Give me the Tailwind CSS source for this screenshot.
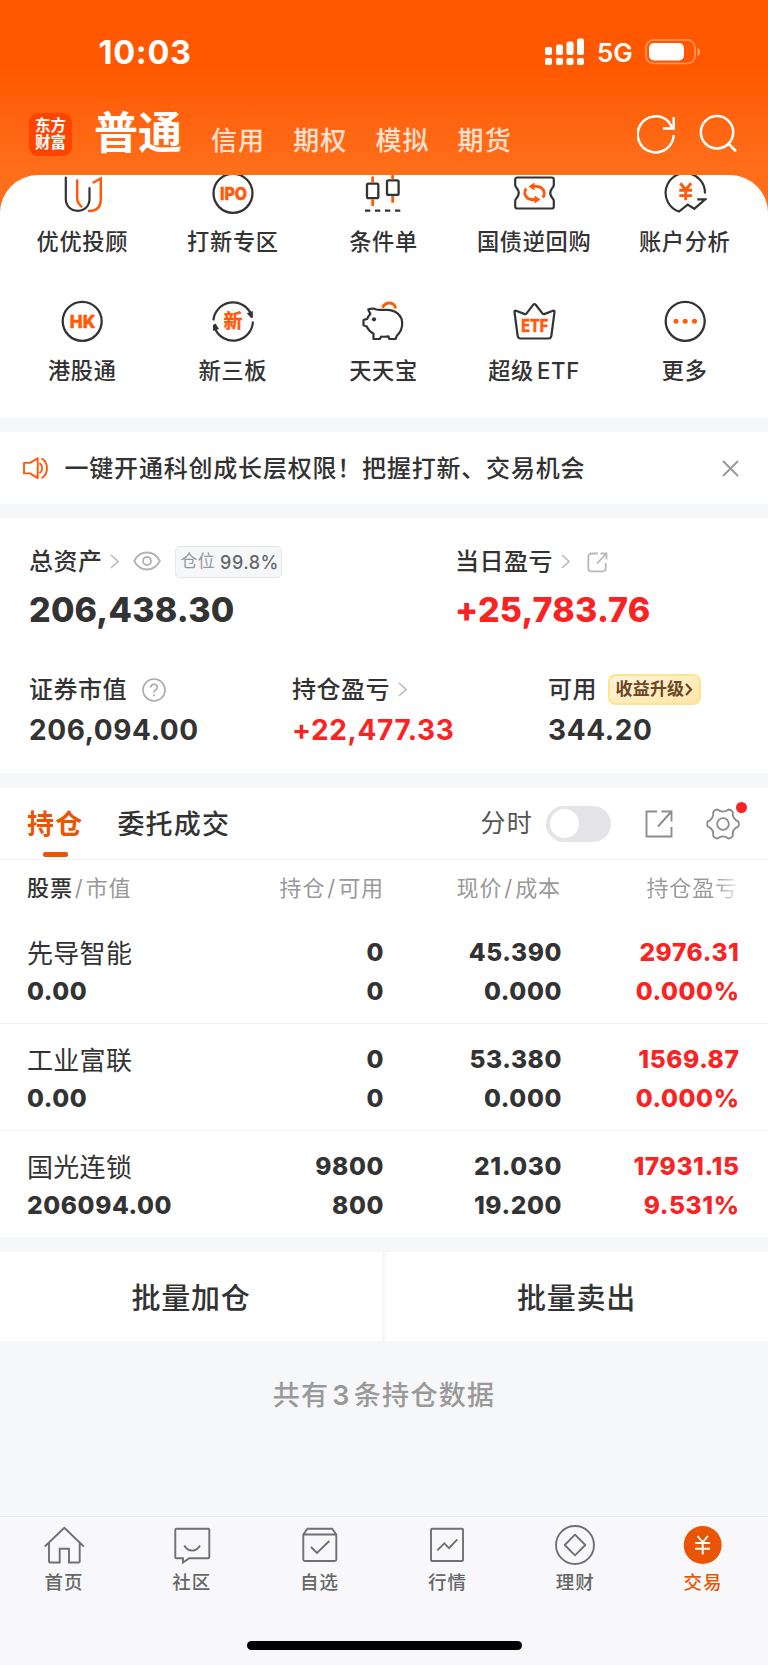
<!DOCTYPE html>
<html lang="zh-CN">
<head>
<meta charset="utf-8">
<meta name="viewport" content="width=device-width, initial-scale=1">
<title>交易</title>
<script src="https://cdn.jsdelivr.net/npm/@tailwindcss/browser@4"></script>
</head>
<body class="w-[768px] h-[1665px] overflow-hidden flex flex-col bg-[#f6f7f9] text-[#333] font-[Inter,'Noto_Sans_CJK_SC',sans-serif] whitespace-nowrap">

<!-- Header -->
<header class="h-[220px] shrink-0 bg-linear-to-b from-[#ff5800] from-30% to-[#ff6f1a] to-80% text-white">
  <div class="h-[104px] pl-[98.5px] pr-[66px] flex items-center">
    <div class="pt-[2px] text-[32.5px] font-bold leading-8 tracking-[0.7px]">10:03</div>
    <svg class="ml-auto mr-3" width="40" height="28" viewBox="0 0 40 28" fill="#fff">
      <rect x="0" y="9" width="7" height="8" rx="2"/><rect x="11" y="6.500" width="7" height="10.500" rx="2"/><rect x="21.500" y="3.500" width="7" height="13.500" rx="2"/><rect x="32" y="0.500" width="7" height="16.500" rx="2"/>
      <rect x="0" y="20" width="7" height="7" rx="2"/><rect x="11" y="20" width="7" height="7" rx="2"/><rect x="21.500" y="20" width="7" height="7" rx="2"/><rect x="32" y="20" width="7" height="7" rx="2"/>
    </svg>
    <div class="text-[26px] font-semibold leading-7 pt-[2px] w-[37px]">5G</div>
    <svg class="ml-[11px]" width="57" height="26" viewBox="0 0 57 26">
      <rect x="1" y="1" width="49" height="23.500" rx="7.500" fill="none" stroke="#fff" stroke-opacity=".4" stroke-width="1.600"/>
      <rect x="4" y="4" width="35" height="17.500" rx="5" fill="#fff"/>
      <path d="M52.500 9v8c3.500-1.200 3.500-6.800 0-8Z" fill="#fff" fill-opacity=".45"/>
    </svg>
  </div>
  <div class="h-[60px] pl-[29px] pr-[29px] flex items-center">
    <div class="size-[43px] rounded-[9px] bg-[#ff4400] flex flex-col items-center justify-center text-[15.5px] leading-[17px] font-bold">
      <span>东方</span><span>财富</span>
    </div>
    <div class="ml-[22px] w-[88px] -mt-[2px] text-[44px] leading-[50px] font-bold">普通</div>
    <nav class="ml-[29px] mt-[13px] flex gap-[28px] text-[26px] leading-8 tracking-[1.1px] text-white/80 font-medium">
      <span>信用</span><span>期权</span><span>模拟</span><span>期货</span>
    </nav>
    <svg class="ml-auto -mt-[1px]" width="102" height="44" viewBox="0 0 102 44" fill="none" stroke="#fff" stroke-width="2.500">
      <path d="M36.700 23A18 18 0 1 1 31.500 9.700L35.500 15.500"/><path d="M36.700 5v11.500H26"/>
      <circle cx="80" cy="20.300" r="16.200"/><path d="M91.500 31.800l7.500 7.500" stroke-width="2.800"/>
    </svg>
  </div>
</header>

<!-- Shortcuts -->
<section class="-mt-[45px] h-[243px] shrink-0 bg-white rounded-t-[38px] overflow-hidden pl-[7px] pr-[8px]">
  <div class="-mt-1 grid grid-cols-5 gap-y-[42px] text-[22.2px] leading-[30px] tracking-[0.7px] font-medium text-center">
    <div class="flex flex-col items-center gap-3">
      <svg width="44" height="44" viewBox="0 0 44 44" fill="none" stroke="#333" stroke-width="2.200" stroke-linecap="round"><path d="M5.800 6.500v21.500c0 7 5 11.800 11.900 11.800s11.800-4.800 11.800-11.800V17"/><g stroke="#ff5a0a" stroke-width="2.500"><path d="M17.200 9.500V27c0 3.800 1.500 6.300 4.200 8.400"/><path d="M33.500 11.500l7.300-4v20.800c0 7.500-4 11.700-11.800 11.700"/></g></svg>
      <span>优优投顾</span>
    </div>
    <div class="flex flex-col items-center gap-3">
      <svg width="44" height="44" viewBox="0 0 44 44"><circle cx="22" cy="22.300" r="19.500" fill="none" stroke="#333" stroke-width="2.300"/><text x="9" y="28.500" font-size="17" font-weight="800" fill="#ff5a0a" stroke="#ff5a0a" stroke-width=".5" stroke-linejoin="round" letter-spacing="0" textLength="27" lengthAdjust="spacingAndGlyphs">IPO</text></svg>
      <span>打新专区</span>
    </div>
    <div class="flex flex-col items-center gap-3">
      <svg width="44" height="44" viewBox="0 0 44 44" fill="none" stroke="#333" stroke-width="2.300"><rect x="6" y="12.600" width="11.300" height="14.600" rx="1.500"/><rect x="26" y="9.300" width="11.600" height="14.600" rx="1.500"/><path d="M4 39.700h5.300M14 39.700h5.300M24 39.700h5.300M34 39.700h5.300"/><path d="M11.700 5.500v6M11.700 28.300V35M31.700 2v6.200M31.700 25v6.800" stroke="#ff5a0a" stroke-width="2.800"/></svg>
      <span>条件单</span>
    </div>
    <div class="flex flex-col items-center gap-3">
      <svg width="44" height="44" viewBox="0 0 44 44" fill="none" stroke="#333" stroke-width="2.200"><path d="M5.200 6.500h34.600a2 2 0 0 1 2 2V14c0 1.200-.5 1.800-1.300 2.700-3.100 3.600-3.100 6.900 0 10.500.8.900 1.300 1.500 1.300 2.800v5.500a2 2 0 0 1-2 2H5.200a2 2 0 0 1-2-2V30c0-1.300.5-1.900 1.300-2.800 3.100-3.600 3.100-6.900 0-10.500-.8-.9-1.300-1.500-1.300-2.700V8.500a2 2 0 0 1 2-2Z"/><g stroke="#ff5a0a" stroke-width="2.900"><path d="M14.300 17.500c-2.700 3-2 7.200 1.500 9.700 1.800 1.200 4 1.500 7.500 1.500"/><path d="M30.700 26.500c2.700-3 2-7.200-1.500-9.700-1.800-1.200-4-1.500-7.500-1.500"/></g><path d="M22.500 24.500v8l6-4ZM22.500 11.500v8l-6-4Z" fill="#ff5a0a" stroke="none"/></svg>
      <span>国债逆回购</span>
    </div>
    <div class="flex flex-col items-center gap-3">
      <svg width="44" height="44" viewBox="0 0 44 44" fill="none" stroke="#333" stroke-width="2.200"><path d="M42 22.500A19.700 19.700 0 1 0 16 40.500l8.700-6.900 6.600 4.200 10.900-9.500h-8"/><path d="M17.300 12.300l5.400 6.500 5.400-6.500M22.700 18.300v10.900M16.300 19.300h12.800M16.300 24.600h12.800" stroke="#ff5a0a" stroke-width="2.900"/></svg>
      <span>账户分析</span>
    </div>
    <div class="flex flex-col items-center gap-[13px]">
      <svg width="44" height="44" viewBox="0 0 44 44"><circle cx="22.200" cy="22.300" r="19.500" fill="none" stroke="#333" stroke-width="2.300"/><text x="9.800" y="28.600" font-size="17" font-weight="800" fill="#ff5a0a" stroke="#ff5a0a" stroke-width=".5" stroke-linejoin="round" letter-spacing="0" textLength="25.500" lengthAdjust="spacingAndGlyphs">HK</text></svg>
      <span>港股通</span>
    </div>
    <div class="flex flex-col items-center gap-[13px]">
      <svg width="44" height="44" viewBox="0 0 44 44" fill="none" stroke="#333" stroke-width="2.200"><path d="M2.400 21.300A19.700 19.700 0 0 1 40 15"/><path d="M41.900 22.500A19.700 19.700 0 0 1 4 29.500"/><path d="M35.800 14.300l5.900-2.300.3 6.500-2 .5ZM8 29.900l-5.900 2.100-.1-6 2.500-1.500Z" fill="#333" stroke="none"/><text x="12.600" y="29" font-size="19" font-weight="700" fill="#ff5a0a" stroke="#ff5a0a" stroke-width=".4" letter-spacing="0">新</text></svg>
      <span>新三板</span>
    </div>
    <div class="flex flex-col items-center gap-[13px]">
      <svg width="44" height="44" viewBox="0 0 44 44" fill="none" stroke="#333" stroke-width="2.200" stroke-linejoin="round"><path d="M15.500 10.500c-2.500-1-5.300-1-8.200-.3.400 2 1 3.300 2.200 4.500-1.500 1.500-2.700 3.300-3.300 5.200L2.500 21v5.300l3.300 1.300c1.300 3.200 3.500 5.300 6.700 7.200V40h6.300l1.400-2.500c2.500.4 4.800.3 7.300-.1L28.200 40h6.300l1.300-3.200c3.500-3.300 5.400-7.500 5.400-12.300C41.200 16.500 34.500 10.900 26 10.900H18.500c-1 0-2-.1-3-.4Z"/><circle cx="13" cy="20.300" r="2.100" fill="#333" stroke="none"/><path d="M21.500 8.700C23 5.500 25.300 4 28.200 4c3.500 0 5.800 2 6.500 5.500" stroke="#ff5a0a" stroke-width="2.900"/></svg>
      <span>天天宝</span>
    </div>
    <div class="flex flex-col items-center gap-[13px]">
      <svg width="44" height="44" viewBox="0 0 44 44"><path d="M4 11.800l8.800 3.300c.7.200 1.200 0 1.600-.5l6.900-8.900c.7-.9 1.700-.9 2.400 0l6.900 8.900c.4.500.9.700 1.600.5l8.800-3.300c1-.3 1.600.2 1.500 1.200L39.400 36.500c-.2 2-1.200 3-3 3H8.600c-1.800 0-2.800-1-3-3L2.500 13c-.1-1 .5-1.500 1.500-1.200Z" fill="none" stroke="#333" stroke-width="2.200"/><text x="9.300" y="32.500" font-size="17" font-weight="800" fill="#ff5a0a" stroke="#ff5a0a" stroke-width=".4" letter-spacing="0" textLength="27" lengthAdjust="spacingAndGlyphs">ETF</text></svg>
      <span>超级<span class="ml-[3px]">ETF</span></span>
    </div>
    <div class="flex flex-col items-center gap-[13px]">
      <svg width="44" height="44" viewBox="0 0 44 44"><circle cx="22.200" cy="22.300" r="19.500" fill="none" stroke="#333" stroke-width="2.300"/><g fill="#ff5a0a"><circle cx="13" cy="22.300" r="2.500"/><circle cx="22.200" cy="22.300" r="2.500"/><circle cx="31.500" cy="22.300" r="2.500"/></g></svg>
      <span>更多</span>
    </div>
  </div>
</section>

<!-- Notice -->
<section class="mt-3.5 h-[72px] shrink-0 bg-white flex items-center pl-[22px] pr-[29px]">
  <svg width="28" height="28" viewBox="0 0 28 28" fill="none" stroke="#ff5a0a" stroke-width="1.900" stroke-linejoin="round"><path d="M2 8.900h6l7.700-4.700v19.900L8 19.400H2ZM17.500 9c3.600 2.800 3.600 7.500 0 10.300M19.500 4.200c7.300 4.500 7.300 15.500 0 20"/></svg>
  <div class="ml-[14.5px] pt-[2px] text-[24px] leading-8 tracking-[0.8px] font-medium">一键开通科创成长层权限！把握打新、交易机会</div>
  <svg class="ml-auto" width="17" height="17" viewBox="0 0 17 17" stroke="#999" stroke-width="1.900"><path d="M1 1l15 15M16 1L1 16"/></svg>
</section>

<!-- Assets -->
<section class="mt-3.5 h-[255px] shrink-0 bg-white pl-[29px] pt-[27px] font-medium">
  <div class="grid grid-cols-[426px_1fr]">
    <div>
      <div class="flex items-center h-8 text-[24px] tracking-[0.5px]">
        <span class="pt-[2px]">总资产</span>
        <svg class="ml-[7px]" width="9" height="15" viewBox="0 0 9 15" fill="none" stroke="#bbb" stroke-width="1.600"><path d="M1 1l7 6.500L1 14"/></svg>
        <svg class="ml-[14px]" width="28" height="20" viewBox="0 0 28 20" fill="none" stroke="#b4b4b4" stroke-width="1.900"><path d="M1.200 10C7-1.300 21-1.300 26.800 10 21 21.300 7 21.300 1.200 10Z"/><circle cx="14" cy="10" r="4"/></svg>
        <span class="ml-[14px] mt-[2px] w-[107px] h-8 rounded-[5px] border border-[#e5e6ea] bg-[#f6f7f9] flex items-center justify-end pr-[1.5px] text-[17px] text-[#999] tracking-[0.3px] font-normal">仓位<b class="ml-[5px] font-medium text-[18px] text-[#666] tracking-[0.5px]">99.8%</b></span>
      </div>
      <div class="mt-[13px] text-[34px] leading-10 font-extrabold tracking-[0.2px]">206,438.30</div>
    </div>
    <div>
      <div class="flex items-center h-8 text-[24px] tracking-[0.5px]">
        <span class="pt-[2px]">当日盈亏</span>
        <svg class="ml-2" width="9" height="15" viewBox="0 0 9 15" fill="none" stroke="#bbb" stroke-width="1.600"><path d="M1 1l7 6.500L1 14"/></svg>
        <svg class="ml-[17px] mt-[2px]" width="21" height="21" viewBox="0 0 21 21" fill="none" stroke="#b8b8b8" stroke-width="1.800"><path d="M11 1.500H4.500a3.200 3.200 0 0 0-3.200 3.200v11.500a3.200 3.200 0 0 0 3.200 3.200h11a3.200 3.200 0 0 0 3.200-3.200V11M10 11.500l9-9.500M13.500 1.500h6v6"/></svg>
      </div>
      <div class="mt-[13px] text-[34px] leading-10 font-extrabold tracking-[0.2px] text-[#f82323]">+25,783.76</div>
    </div>
  </div>
  <div class="mt-[43px] grid grid-cols-[263px_256px_1fr]">
    <div>
      <div class="flex items-center h-8 text-[24px] tracking-[0.5px]">
        <span class="pt-[2px]">证券市值</span>
        <svg class="ml-[15px] mt-[1px]" width="24" height="24" viewBox="0 0 24 24" fill="none" stroke="#aaa" stroke-width="1.600"><circle cx="12" cy="12" r="11"/><path d="M8.800 9.600c0-2 1.300-3.300 3.200-3.300s3.200 1.200 3.200 3c0 2.600-3.200 2.700-3.200 5.500M12 16.300v2"/></svg>
      </div>
      <div class="mt-2 text-[28px] leading-[34px] font-bold tracking-[0.6px]">206,094.00</div>
    </div>
    <div>
      <div class="flex items-center h-8 text-[24px] tracking-[0.5px]">
        <span class="pt-[2px]">持仓盈亏</span>
        <svg class="ml-2" width="9" height="15" viewBox="0 0 9 15" fill="none" stroke="#bbb" stroke-width="1.600"><path d="M1 1l7 6.500L1 14"/></svg>
      </div>
      <div class="mt-2 text-[28px] leading-[34px] font-bold tracking-[0.6px] text-[#f82323]">+22,477.33</div>
    </div>
    <div>
      <div class="flex items-center h-8 text-[24px] tracking-[0.5px]">
        <span class="pt-[2px]">可用</span>
        <span class="ml-[11px] w-[93px] h-[31px] rounded-lg border-2 border-[#fde58a] bg-linear-to-br from-[#fff3d9] to-[#ffe6a8] flex items-center pl-[5.5px] text-[17px] font-bold text-[#6a4526] tracking-[0.2px]"><span class="pt-px">收益升级</span><svg class="ml-px" width="8" height="13" viewBox="0 0 8 13" fill="none" stroke="#6a4526" stroke-width="2.200"><path d="M1 1l5 5.500L1 12"/></svg></span>
      </div>
      <div class="mt-2 text-[28px] leading-[34px] font-bold tracking-[0.6px]">344.20</div>
    </div>
  </div>
</section>

<!-- Tabs -->
<section class="mt-[15px] h-[72px] shrink-0 bg-white border-b border-[#f1f2f4] flex items-center pl-[27px] pr-[27px] text-[27px] font-medium tracking-[1.2px]">
  <div class="relative pt-[3px] font-bold text-[#ea5504]">持仓<span class="absolute left-4 top-[50px] w-[25px] h-[5px] rounded-[2px] bg-[#ea5504]"></span></div>
  <div class="ml-[34px] pt-[3px]">委托成交</div>
  <div class="ml-auto pt-[1px] text-[25px] font-normal text-[#555]">分时</div>
  <div class="ml-[13px] w-[65px] h-9 rounded-full bg-[#e4e4e6] p-[3.5px]"><div class="size-[29px] rounded-full bg-white"></div></div>
  <svg class="ml-[34px]" width="28" height="28" viewBox="0 0 28 28" fill="none" stroke="#8c8c8c" stroke-width="1.900"><path d="M12 1.500H1.500v25h25V17M13 16.500L26 2M16.500 1.500h10v10"/></svg>
  <div class="relative ml-[32px]">
    <svg width="36" height="36" viewBox="-18.500 -18.500 37 37" fill="none" stroke="#8c8c8c" stroke-width="1.900"><circle r="6"/><path d="M15.800-2.500Q17 0 15.800 2.500 9.100 5.250 10.070 12.430 8.500 14.700 5.730 14.940 0 10.500-5.730 14.940-8.500 14.700-10.070 12.430-9.100 5.250-15.800 2.500-17 0-15.800-2.500-9.100-5.250-10.070-12.430-8.500-14.700-5.730-14.940 0-10.500 5.730-14.940 8.500-14.700 10.070-12.430 9.100-5.250 15.800-2.500Z"/></svg>
    <span class="absolute -top-[4px] left-[31px] size-[11px] rounded-full bg-[#f82323]"></span>
  </div>
</section>

<!-- Holdings -->
<section class="shrink-0 bg-white">
  <div class="h-[57px] pl-[27px] pr-[30px] grid grid-cols-[170px_187px_177px_1fr] items-center text-right text-[22px] text-[#999] tracking-[0.9px]">
    <div class="text-left"><span class="font-medium text-[#333]">股票</span><span class="mx-[2px]">/</span>市值</div>
    <div>持仓<span class="mx-[2px]">/</span>可用</div>
    <div>现价<span class="mx-[2px]">/</span>成本</div>
    <div><span class="bg-linear-to-r from-[#999] from-75% to-[#eee] bg-clip-text text-transparent">持仓盈亏</span></div>
  </div>
  <div class="h-[107px] border-b border-[#f1f2f4] pt-[16px] pl-[27px] pr-[28.5px] grid grid-cols-[170px_187px_178px_1fr] auto-rows-[39px] leading-[39px] text-right text-[24.5px] font-extrabold tracking-[0.6px]">
    <div class="text-left text-[26px] font-normal tracking-[0.3px] pt-px">先导智能</div><div>0</div><div>45.390</div><div class="text-[#f82323]">2976.31</div>
    <div class="text-left">0.00</div><div>0</div><div>0.000</div><div class="text-[#f82323]">0.000%</div>
  </div>
  <div class="h-[107px] border-b border-[#f1f2f4] pt-[16px] pl-[27px] pr-[28.5px] grid grid-cols-[170px_187px_178px_1fr] auto-rows-[39px] leading-[39px] text-right text-[24.5px] font-extrabold tracking-[0.6px]">
    <div class="text-left text-[26px] font-normal tracking-[0.3px] pt-px">工业富联</div><div>0</div><div>53.380</div><div class="text-[#f82323]">1569.87</div>
    <div class="text-left">0.00</div><div>0</div><div>0.000</div><div class="text-[#f82323]">0.000%</div>
  </div>
  <div class="h-[106px] pt-[16px] pl-[27px] pr-[28.5px] grid grid-cols-[170px_187px_178px_1fr] auto-rows-[39px] leading-[39px] text-right text-[24.5px] font-extrabold tracking-[0.6px]">
    <div class="text-left text-[26px] font-normal tracking-[0.3px] pt-px">国光连锁</div><div>9800</div><div>21.030</div><div class="text-[#f82323]">17931.15</div>
    <div class="text-left">206094.00</div><div>800</div><div>19.200</div><div class="text-[#f82323]">9.531%</div>
  </div>
</section>

<!-- Batch actions -->
<section class="mt-[15px] h-[89px] shrink-0 grid grid-cols-[382px_1fr] gap-[3px] text-[29px] font-medium tracking-[0.8px] text-center leading-[93px]">
  <div class="bg-white h-[89px]">批量加仓</div><div class="bg-white h-[89px]">批量卖出</div>
</section>
<p class="mt-[35px] text-center text-[27px] leading-10 font-medium text-[#999] tracking-[1.3px]">共有<span class="mx-[3px] font-semibold">3</span>条持仓数据</p>

<!-- Bottom navigation -->
<nav class="mt-auto h-[149px] shrink-0 bg-[#f8f8fb] border-t border-[#e9eaec]">
  <div class="pt-[6px] pr-px grid grid-cols-6 text-[18.5px] leading-6 tracking-[1px] text-[#666] font-medium">
    <div class="flex flex-col items-center gap-[3px]"><svg width="44" height="44" viewBox="0 0 44 44" fill="none" stroke="#707070" stroke-width="1.900"><path d="M2.800 23.500L22.300 4.700 41.800 23.500M7 20v18.500a1 1 0 0 0 1 1h9.700V25.700H27v13.800h9.700a1 1 0 0 0 1-1V20"/></svg><span>首页</span></div>
    <div class="flex flex-col items-center gap-[3px]"><svg width="44" height="44" viewBox="0 0 44 44" fill="none" stroke="#707070" stroke-width="1.900"><path d="M6.300 5.700h32a1 1 0 0 1 1 1v27.600a1 1 0 0 1-1 1h-19L13 39.500v-4.200H6.300a1 1 0 0 1-1-1V6.700a1 1 0 0 1 1-1ZM14.300 22.500c4 6.800 11.700 6.800 15.700 0"/></svg><span>社区</span></div>
    <div class="flex flex-col items-center gap-[3px]"><svg width="44" height="44" viewBox="0 0 44 44" fill="none" stroke="#707070" stroke-width="1.900"><path d="M5.300 11.500l4.200-5.800h24.600l4.200 5.800v25a1.500 1.500 0 0 1-1.500 1.500h-30a1.500 1.500 0 0 1-1.500-1.500ZM5.300 11.500h33M13 24l6 6 12.300-12"/></svg><span>自选</span></div>
    <div class="flex flex-col items-center gap-[3px]"><svg width="44" height="44" viewBox="0 0 44 44" fill="none" stroke="#707070" stroke-width="1.900"><rect x="6" y="5.700" width="32" height="32.300" rx="1"/><path d="M12.300 27.300l7-7 4.700 4.900 8.300-8.900"/></svg><span>行情</span></div>
    <div class="flex flex-col items-center gap-[3px]"><svg width="44" height="44" viewBox="0 0 44 44" fill="none" stroke="#707070" stroke-width="1.900" stroke-linejoin="round"><circle cx="22" cy="22" r="19"/><path d="M22 11.700L32.300 22 22 32.300 11.700 22Z"/></svg><span>理财</span></div>
    <div class="flex flex-col items-center gap-[3px] text-[#ea5504]"><svg width="44" height="44" viewBox="0 0 44 44" fill="none" stroke="#fff" stroke-width="1.900"><circle cx="21.700" cy="22" r="19" fill="#ea5504" stroke="none"/><path d="M16.500 13l5.200 6.300 5.200-6.300M21.700 19v12.500M14.300 20h14.800M14.300 25.700h14.800"/></svg><span>交易</span></div>
  </div>
  <div class="mt-[47px] mx-auto w-[275px] h-[9px] rounded-full bg-black"></div>
</nav>
</body>
</html>
